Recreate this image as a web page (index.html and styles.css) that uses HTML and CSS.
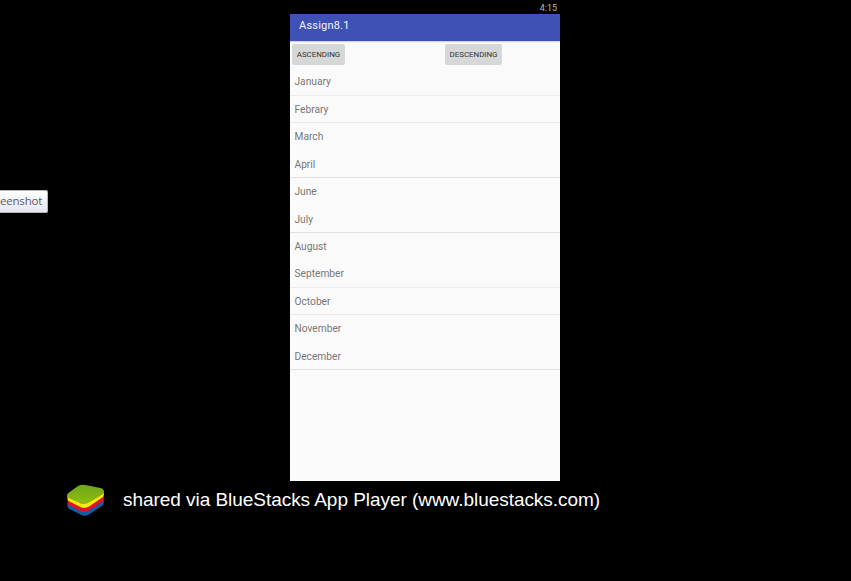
FILE: index.html
```html
<!DOCTYPE html>
<html lang="en">
<head>
<meta charset="utf-8">
<title>Assign8.1</title>
<link rel="stylesheet" href="styles.css">
</head>
<body>
<main class="phone">
  <div class="status">4:15</div>
  <header class="appbar">Assign8.1</header>
  <div class="actions">
    <button class="btn asc"><span>ASCENDING</span></button>
    <button class="btn desc"><span>DESCENDING</span></button>
  </div>
  <ul class="months">
    <li class="line">January</li>
    <li class="line">Febrary</li>
    <li>March</li>
    <li class="line dark">April</li>
    <li>June</li>
    <li class="line dark">July</li>
    <li>August</li>
    <li class="line">September</li>
    <li class="line">October</li>
    <li>November</li>
    <li class="line dark">December</li>
  </ul>
</main>
<footer class="share">
  <svg class="logo" width="40" height="34" viewBox="0 0 40 34">
    <defs><linearGradient id="g" x1="0" y1="0" x2="0" y2="1"><stop offset="0" stop-color="#6fa51e"/><stop offset="1" stop-color="#8fbf0c"/></linearGradient></defs>
    <path fill="#0f5fa8" d="M1.500 20 L37.500 17 Q38.500 20 37 22 L23 31.500 Q18.500 34 14.500 31.500 L2.500 25.500 Q1 24 1.500 20 Z"/>
    <path fill="#dc1428" d="M1.500 16 L37.500 13 Q38.500 16 37 18.500 L23 27.500 Q18.500 30 14.500 28 L2.500 22 Q1 20 1.500 16 Z"/>
    <path fill="#ffe90a" d="M1.500 12 L37.500 8 Q38.500 12 37 14 L23 23.500 Q18.500 26 14.500 24 L2.500 18 Q1 16 1.500 12 Z"/>
    <path fill="url(#g)" d="M1.500 14.500 Q0 12 3 9.500 L12 3 Q15.500 .8 21 2.200 L35.500 5.300 Q38.500 6.500 37.500 10 Q37 11.500 34 13 L23 19.500 Q18.500 22 14.500 20.500 Z"/>
  </svg>
  <span class="caption">shared via BlueStacks App Player (www.bluestacks.com)</span>
</footer>
<div class="tooltip">eenshot</div>
</body>
</html>
```
FILE: styles.css
```css
* { box-sizing: border-box; }
body {
  margin: 0;
  height: 581px;
  overflow: hidden;
  background: #000;
  font-family: Roboto, sans-serif;
}
.phone {
  width: 270px;
  height: 481px;
  margin-left: 290px;
  overflow: hidden;
  background: #fafafa;
}
.status {
  height: 14px;
  padding-right: 3px;
  background: #000;
  color: #b8b8b8;
  font-size: 9px;
  line-height: 16px;
  text-align: right;
}
.appbar {
  height: 27px;
  padding-left: 9px;
  background: #3f51b5;
  color: #f4f5fb;
  font-size: 11px;
  line-height: 23px;
  letter-spacing: .2px;
  box-shadow: 0 1px 1px #d2d3e3;
}
.actions {
  display: flex;
  height: 27px;
  padding: 3px 0 0 2px;
}
.btn {
  height: 21px;
  padding: 0;
  border: 0;
  border-radius: 2px;
  background: #d6d7d7;
  color: #333;
  font: 7.9px/22px Roboto, sans-serif;
  white-space: nowrap;
}
.asc { width: 53px; }
.desc { width: 57px; margin-left: 100px; }
.months {
  margin: 0;
  padding: .4px 0 0;
  list-style: none;
}
.months li {
  height: 27.45px;
  padding-left: 4.500px;
  color: #777;
  font-size: 10.2px;
  line-height: 28.2px;
}
.line { border-bottom: 1px solid #ebebeb; }
.months .dark { border-bottom-color: #e0e0e0; }
.share {
  display: flex;
  align-items: center;
  height: 38px;
  padding-left: 66px;
}
.logo { flex: none; }
.caption {
  margin-left: 17px;
  color: #fff;
  font: 19px/38px "Liberation Sans", sans-serif;
  letter-spacing: -.045px;
  white-space: nowrap;
}
.tooltip {
  position: absolute;
  top: 190px;
  left: 0;
  width: 48px;
  height: 23px;
  border: 1px solid #b5b5bb;
  border-left: 0;
  border-radius: 0 2px 2px 0;
  background: linear-gradient(#fff, #e5e5f0);
  color: #5b5b5f;
  font: 11.5px/20px "Open Sans", sans-serif;
  letter-spacing: -.2px;
}
```
